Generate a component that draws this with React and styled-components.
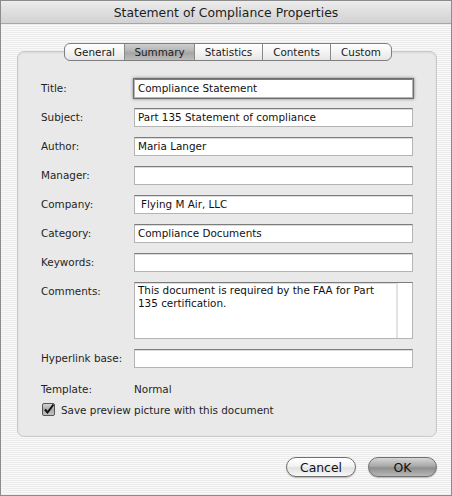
import React from "react";
import styled, { createGlobalStyle } from "styled-components";

const Global = createGlobalStyle`
  html, body { margin: 0; padding: 0; background: #fff; }
  body { font-family: "DejaVu Sans", "Liberation Sans", sans-serif; }
`;

const Window = styled.div`
  width: 452px;
  height: 496px;
  box-sizing: border-box;
  border: 1px solid #8c8c8c;
  display: flex;
  flex-direction: column;
  background: repeating-linear-gradient(to bottom, #f9f9f9 0 1px, #ececec 1px 2px);
  overflow: hidden;
`;

const TitleBar = styled.div`
  height: 21px;
  flex: none;
  border-bottom: 1px solid #a6a6a6;
  background: linear-gradient(to bottom, #ededed 0%, #dedede 50%, #d2d2d2 100%);
  display: flex;
  align-items: center;
  justify-content: center;
  font-size: 12.4px;
  color: #1e1e1e;
  padding-top: 1px;
`;

const Body = styled.div`
  flex: 1;
  display: flex;
  flex-direction: column;
  padding: 19px 14px 0 15px;
`;

const TabBar = styled.div`
  display: flex;
  align-self: flex-start;
  margin-left: 48px;
  height: 18px;
  box-sizing: border-box;
  border: 1px solid #7e7e7e;
  border-radius: 6px;
  overflow: hidden;
  position: relative;
  z-index: 1;
  background: linear-gradient(to bottom, #ffffff 0%, #f4f4f4 50%, #e6e6e6 100%);
`;

const Tab = styled.div`
  width: ${(p) => p.$w}px;
  box-sizing: border-box;
  display: flex;
  align-items: center;
  justify-content: center;
  font-size: 10.4px;
  color: #1a1a1a;
  border-left: ${(p) => (p.$first ? "none" : "1px solid #8a8a8a")};
  background: ${(p) =>
    p.$active
      ? "linear-gradient(to bottom, #cfcfcf 0%, #b4b4b4 45%, #a4a4a4 55%, #bdbdbd 100%)"
      : "transparent"};
`;

const Group = styled.div`
  margin-top: -10px;
  margin-left: 1px;
  width: 420px;
  box-sizing: border-box;
  border: 1px solid #c9c9c9;
  border-radius: 7px;
  background: #e9e9e9;
  box-shadow: inset 0 1px 2px rgba(0, 0, 0, 0.08);
  padding: 27px 23px 20px 23px;
  display: flex;
  flex-direction: column;
`;

const Form = styled.div`
  display: grid;
  grid-template-columns: 93px 279px;
  row-gap: 10px;
`;

const Label = styled.div`
  font-size: 10.4px;
  line-height: 19px;
  color: #1f1f1f;
  align-self: start;
  white-space: nowrap;
  margin-top: ${(p) => p.$mt || 0}px;
`;

const Field = styled.div`
  height: ${(p) => p.$h || 19}px;
  box-sizing: border-box;
  background: #fff;
  border: 1px solid #b4b4b4;
  border-top-color: #7c7c7c;
  box-shadow: ${(p) =>
    p.$focus
      ? "0 0 0 1px #6e6e6e, 0 0 3px 1px rgba(0,0,0,0.45)"
      : "inset 0 1px 0 #dcdcdc"};
  font-size: 10.4px;
  line-height: 17px;
  padding: 0 4px 0 ${(p) => p.$pl || 3}px;
  color: #111;
  display: flex;
  white-space: nowrap;
`;

const AreaText = styled.div`
  flex: 1;
  white-space: normal;
  line-height: 13px;
  padding-top: 1px;
`;

const ScrollTrack = styled.div`
  width: 14px;
  margin-right: -4px;
  border-left: 2px solid #e2e2e2;
  background: #fff;
`;

const Value = styled.div`
  font-size: 10.4px;
  line-height: 19px;
  color: #1f1f1f;
  margin-top: 2px;
`;

const CheckRow = styled.div`
  display: flex;
  align-items: center;
  gap: 6px;
  margin-top: 4px;
  margin-left: 1px;
  font-size: 10.4px;
  color: #1f1f1f;
`;

const Footer = styled.div`
  display: flex;
  justify-content: flex-end;
  gap: 12px;
  margin-top: 20px;
`;

const Button = styled.div`
  width: ${(p) => p.$w}px;
  height: 20px;
  box-sizing: border-box;
  border-radius: 10px;
  border: 1px solid #6f6f6f;
  display: flex;
  align-items: center;
  justify-content: center;
  font-size: 12.4px;
  color: #111;
  background: ${(p) =>
    p.$default
      ? "linear-gradient(to bottom, #d6d6d6 0%, #a9a9a9 45%, #8e8e8e 55%, #b8b8b8 100%)"
      : "linear-gradient(to bottom, #ffffff 0%, #f3f3f3 45%, #e2e2e2 55%, #f7f7f7 100%)"};
  box-shadow: 0 1px 1px rgba(0, 0, 0, 0.25);
`;

const CheckBox = () => (
  <svg width="13" height="13" viewBox="0 0 13 13">
    <defs>
      <linearGradient id="cbg" x1="0" y1="0" x2="0" y2="1">
        <stop offset="0" stopColor="#d8d8d8" />
        <stop offset="0.5" stopColor="#a8a8a8" />
        <stop offset="1" stopColor="#c4c4c4" />
      </linearGradient>
    </defs>
    <rect x="0.5" y="0.5" width="12" height="12" rx="1.5" fill="url(#cbg)" stroke="#555" />
    <path d="M3 6.5 L5.5 9.5 L11.5 1.5" fill="none" stroke="#111" strokeWidth="2" />
  </svg>
);

const tabs = [
  { name: "General", w: 59 },
  { name: "Summary", w: 70, active: true },
  { name: "Statistics", w: 68 },
  { name: "Contents", w: 68 },
  { name: "Custom", w: 61 },
];

const rows = [
  { label: "Title:", value: "Compliance Statement", focus: true },
  { label: "Subject:", value: "Part 135 Statement of compliance" },
  { label: "Author:", value: "Maria Langer" },
  { label: "Manager:", value: "" },
  { label: "Company:", value: "Flying M Air, LLC", pl: 6 },
  { label: "Category:", value: "Compliance Documents" },
  { label: "Keywords:", value: "" },
];

export default function App() {
  return (
    <>
      <Global />
      <Window>
        <TitleBar>Statement of Compliance Properties</TitleBar>
        <Body>
          <TabBar>
            {tabs.map((t, i) => (
              <Tab key={t.name} $w={t.w} $active={t.active} $first={i === 0}>
                {t.name}
              </Tab>
            ))}
          </TabBar>
          <Group>
            <Form>
              {rows.map((r) => (
                <React.Fragment key={r.label}>
                  <Label>{r.label}</Label>
                  <Field $focus={r.focus} $pl={r.pl}>{r.value}</Field>
                </React.Fragment>
              ))}
              <Label>Comments:</Label>
              <Field $h={57}>
                <AreaText>This document is required by the FAA for Part 135 certification.</AreaText>
                <ScrollTrack />
              </Field>
              <Label>Hyperlink base:</Label>
              <Field />
              <Label $mt={2}>Template:</Label>
              <Value>Normal</Value>
            </Form>
            <CheckRow>
              <CheckBox />
              <span>Save preview picture with this document</span>
            </CheckRow>
          </Group>
          <Footer>
            <Button $w={70}>Cancel</Button>
            <Button $w={69} $default>OK</Button>
          </Footer>
        </Body>
      </Window>
    </>
  );
}
